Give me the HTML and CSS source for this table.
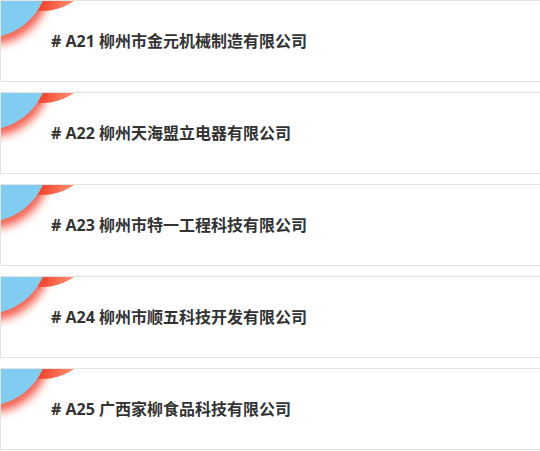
FILE: index.html
```html
<!DOCTYPE html>
<html>
<head>
    <meta charset="utf-8">
    <title>企业列表</title>
    <link rel="stylesheet" href="styles.css">
</head>
<body>

<div class="list">
    <div class="item"><span class="tit"># A21 柳州市金元机械制造有限公司</span></div>
    <div class="item"><span class="tit"># A22 柳州天海盟立电器有限公司</span></div>
    <div class="item"><span class="tit"># A23 柳州市特一工程科技有限公司</span></div>
    <div class="item"><span class="tit"># A24 柳州市顺五科技开发有限公司</span></div>
    <div class="item"><span class="tit"># A25 广西家柳食品科技有限公司</span></div>
</div>

</body>
</html>
```

FILE: styles.css
```css
body{ margin: 0;background: #FFF;font-family: "Open Sans", "Noto Sans CJK SC", sans-serif;}
.list{ display: flex;flex-direction: column;gap: 10px;}
.item{
    position: relative;
    overflow: hidden;
    display: flex;
    align-items: center;
    padding-left: 50px;
    padding-bottom: 3px;
    box-sizing: border-box;
    height: 82px;
    border: solid 1px #E3E3E3;
    border-right: none;
}
/* 左上角的装饰圆 */
.item:before{
    content: '';
    position: absolute;
    left: -20px;
    top: -110px;
    width: 120px;
    height: 120px;
    border-radius: 50%;
    background: linear-gradient(to right, #F2452A 45%, #FF8E6E 78%);
}
.item:after{
    content: '';
    position: absolute;
    left: -77px;
    top: -87px;
    width: 124px;
    height: 124px;
    border-radius: 50%;
    background: #81CDF2;
    box-shadow: 3px 7px 9px rgba(244, 70, 50, .85);
}
.item .tit{
    position: relative;
    z-index: 1;
    font-size: 16px;
    font-weight: bold;
    color: #333;
}
```
